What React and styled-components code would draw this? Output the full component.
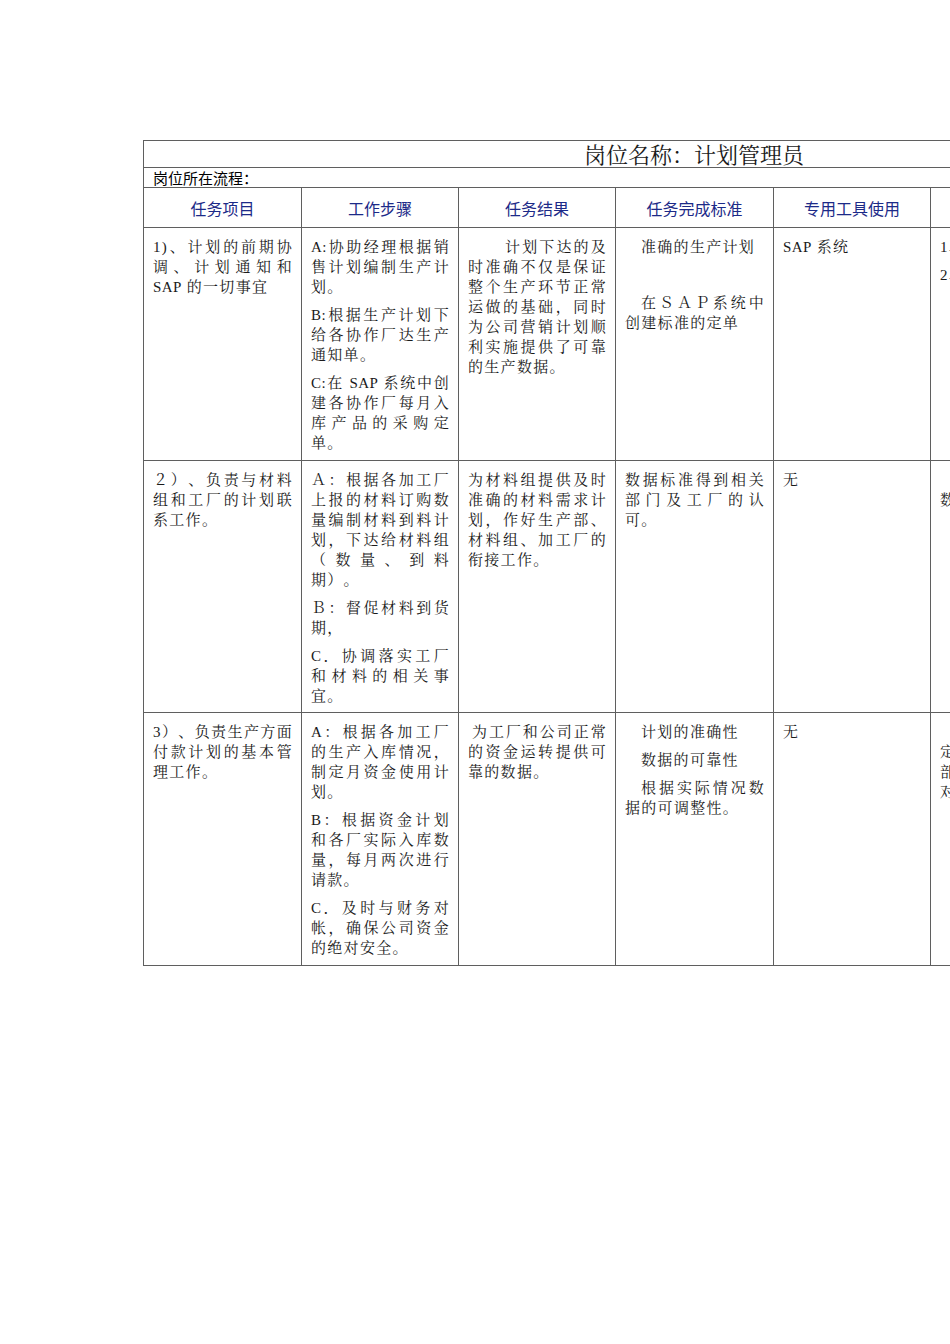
import React from "react";
import styled, { createGlobalStyle } from "styled-components";

const GlobalStyle = createGlobalStyle`
  html, body {
    margin: 0;
    padding: 0;
    background: #ffffff;
    overflow: hidden;
  }
  body {
    font-family: "Liberation Serif", "Noto Serif CJK SC", "Noto Sans CJK SC", serif;
    text-spacing-trim: space-all;
  }
`;

const serif = `"Liberation Serif", "Noto Serif CJK SC", "Noto Sans CJK SC", serif`;
const sans = `"Noto Sans CJK SC", "Noto Sans", sans-serif`;

const rows = [
  {
    height: 233,
    cells: [
      [{ text: "1)、计划的前期协调、计划通知和SAP 的一切事宜" }],
      [
        { text: "A:协助经理根据销售计划编制生产计划。" },
        { text: "B:根据生产计划下给各协作厂达生产通知单。" },
        { text: "C:在 SAP 系统中创建各协作厂每月入库产品的采购定单。" },
      ],
      [
        {
          text: "计划下达的及时准确不仅是保证整个生产环节正常运做的基础，同时为公司营销计划顺利实施提供了可靠的生产数据。",
          indent: 37,
        },
      ],
      [
        { text: "准确的生产计划", indent: 16 },
        { text: "\u00a0" },
        { text: "在ＳＡＰ系统中创建标准的定单", indent: 16 },
      ],
      [{ text: "SAP 系统" }],
      [{ text: "1、计划的制定" }, { text: "2、系统的维护", gap: 6 }],
    ],
  },
  {
    height: 252,
    cells: [
      [{ text: "２）、负责与材料组和工厂的计划联系工作。" }],
      [
        { text: "Ａ：根据各加工厂上报的材料订购数量编制材料到料计划，下达给材料组（数量、到料期）。" },
        { text: "Ｂ：督促材料到货期，" },
        { text: "C．协调落实工厂和材料的相关事宜。" },
      ],
      [{ text: "为材料组提供及时准确的材料需求计划，作好生产部、材料组、加工厂的衔接工作。" }],
      [{ text: "数据标准得到相关部门及工厂的认可。" }],
      [{ text: "无" }],
      [{ text: "数据及时准确", lead: true }],
    ],
  },
  {
    height: 253,
    cells: [
      [{ text: "3）、负责生产方面付款计划的基本管理工作。" }],
      [
        { text: "A：根据各加工厂的生产入库情况，制定月资金使用计划。" },
        { text: "B：根据资金计划和各厂实际入库数量，每月两次进行请款。" },
        { text: "C．及时与财务对帐，确保公司资金的绝对安全。" },
      ],
      [{ text: "为工厂和公司正常的资金运转提供可靠的数据。", indent: 4 }],
      [
        { text: "计划的准确性", indent: 16 },
        { text: "数据的可靠性", indent: 16 },
        { text: "根据实际情况数据的可调整性。", indent: 16 },
      ],
      [{ text: "无" }],
      [{ text: "定期汇总付款计划部门实际付款情况对账结果。", lead: true }],
    ],
  },
];

const headers = ["任务项目", "工作步骤", "任务结果", "任务完成标准", "专用工具使用", "考核指标"];
const widths = [158, 157, 157, 158, 157, 157];

// Latin letters sit a little tighter than the CJK characters
const renderText = (text) =>
  text.split(/([A-Za-z]+)/).map((part, i) =>
    /^[A-Za-z]+$/.test(part) ? <Latin key={i}>{part}</Latin> : part
  );

export default function App() {
  return (
    <>
      <GlobalStyle />
      <Page>
        <Sheet>
          <colgroup>
            {widths.map((w, i) => (
              <col key={i} style={{ width: w }} />
            ))}
          </colgroup>
          <tbody>
            <tr>
              <TitleCell colSpan={6}>岗位名称：计划管理员</TitleCell>
            </tr>
            <tr>
              <FlowCell colSpan={6}>岗位所在流程：</FlowCell>
            </tr>
            <tr>
              {headers.map((h) => (
                <HeadCell key={h}>{h}</HeadCell>
              ))}
            </tr>
            {rows.map((row, r) => (
              <BodyRow key={r} $h={row.height}>
                {row.cells.map((paras, c) => (
                  <BodyCell key={c}>
                    {paras.map((p, k) => (
                      <Para key={k} $indent={p.indent || 0} $gap={p.gap || 0}>
                        {p.lead && <br />}
                        {renderText(p.text)}
                      </Para>
                    ))}
                  </BodyCell>
                ))}
              </BodyRow>
            ))}
          </tbody>
        </Sheet>
      </Page>
    </>
  );
}

const Page = styled.div`
  padding: 140px 0 0 143px;
  width: 1200px;
  min-height: 1344px;
  box-sizing: border-box;
`;

const Sheet = styled.table`
  border-collapse: collapse;
  table-layout: fixed;
  width: 944px;
  border: 1px solid #5f5f5f;
`;

const TitleCell = styled.td`
  height: 23px;
  padding: 3px 0 0 440px;
  border: 1px solid #5f5f5f;
  font-family: ${serif};
  font-size: 22px;
  line-height: 23px;
  color: #1a1a1a;
  vertical-align: bottom;
  white-space: nowrap;
  overflow: hidden;
`;

const FlowCell = styled.td`
  height: 19px;
  padding: 0 0 0 9px;
  border: 1px solid #5f5f5f;
  font-family: ${sans};
  font-size: 15px;
  line-height: 18px;
  color: #000;
  vertical-align: bottom;
  overflow: hidden;
`;

const HeadCell = styled.th`
  height: 39px;
  padding: 0;
  border: 1px solid #5f5f5f;
  font-family: ${sans};
  font-size: 16px;
  font-weight: 400;
  color: #1c2a88;
  text-align: center;
  vertical-align: middle;
`;

const BodyRow = styled.tr`
  height: ${(p) => p.$h}px;
`;

const BodyCell = styled.td`
  padding: 9px 8px 0 9px;
  border: 1px solid #5f5f5f;
  vertical-align: top;
  font-family: ${serif};
  font-size: 15px;
  line-height: 20px;
  letter-spacing: 1.3px;
  color: #1a1a1a;
  overflow: hidden;
`;

const Para = styled.p`
  margin: ${(p) => p.$gap}px 0 8px;
  text-align: justify;
  text-indent: ${(p) => p.$indent}px;
  line-break: strict;

  &:last-child {
    margin-bottom: 0;
  }
`;

const Latin = styled.span`
  letter-spacing: 0.4px;
`;
